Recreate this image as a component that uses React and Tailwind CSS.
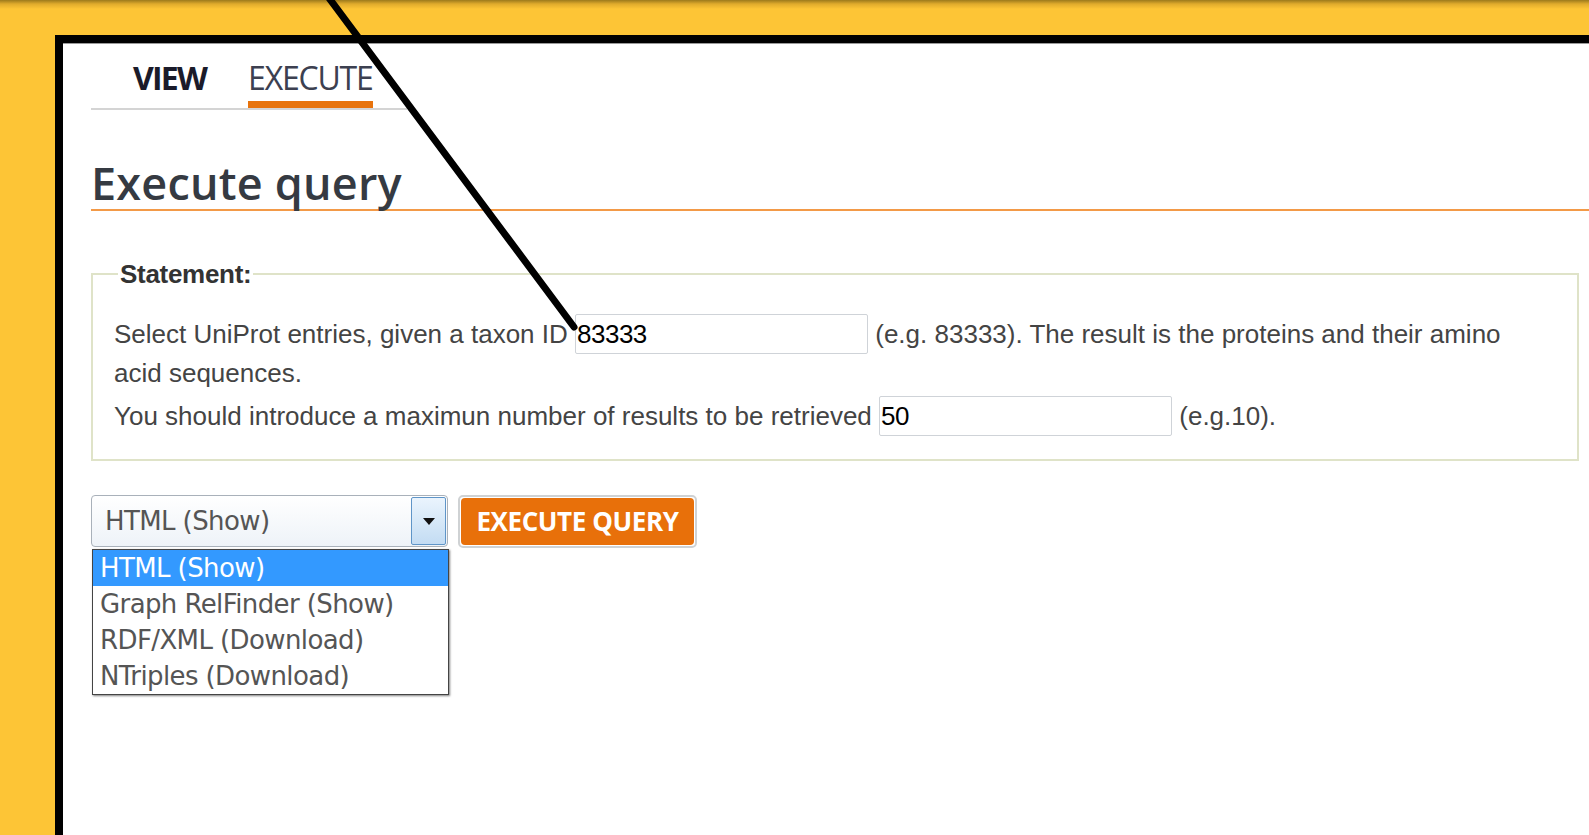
import { useState } from 'react';

const OPTIONS = ['HTML (Show)', 'Graph RelFinder (Show)', 'RDF/XML (Download)', 'NTriples (Download)'];

export default function App() {
  const [format, setFormat] = useState(OPTIONS[0]);
  const [taxon, setTaxon] = useState('83333');
  const [limit, setLimit] = useState('50');

  return (
    <div className="relative w-[1589px] h-[835px] overflow-hidden bg-[#fdc536] bg-[linear-gradient(to_bottom,#9c7a1c_0px,#e0ab2c_4px,#fdc536_9px,#fdc536_100%)]">
      <div className="h-full pt-[35px] pl-[55px]">
        {/* Page frame */}
        <div className="h-full border-l-8 border-t-8 border-black bg-white shadow-[inset_0_1px_0_#9a9a9a] pl-[28px] font-['Open_Sans',sans-serif]">
          {/* Tabs */}
          <div className="flex w-[316px] gap-[42px] pl-[42px] pt-[17px] border-b-2 border-[#d4d4d4]">
            <div className="text-[32px] leading-[36px] font-bold tracking-[-1.8px] text-[#1b1b2a]">VIEW</div>
            <div className="text-[32px] leading-[36px] tracking-[-1.2px] text-[#3c4050]">
              EXECUTE
              <div className="mt-[5px] h-[7px] bg-[#e8730c]" />
            </div>
          </div>

          <h1 className="mt-[47px] border-b-2 border-[#f39a47] text-[45px] leading-[52px] font-semibold tracking-[0.2px] text-[#353a42]">
            Execute query
          </h1>

          {/* Statement */}
          <fieldset className="mt-[48px] mr-[10px] border-2 border-[#dfe3c8] pl-[21px] pr-[45px] pb-[23px] font-['Liberation_Sans',Arial,sans-serif] text-[26px] text-[#444]">
            <legend className="ml-[4px] px-[2px] text-[26px] leading-[30px] font-bold tracking-[-0.3px] text-[#333]">Statement:</legend>
            <p className="mt-[25px] leading-[38px]">
              Select UniProt entries, given a taxon ID{' '}
              <input
                value={taxon}
                onChange={(e) => setTaxon(e.target.value)}
                className="h-[40px] w-[293px] border border-[#cfd3d8] rounded-[2px] px-[1px] text-[26px] tracking-[-0.5px] text-black outline-none"
              />{' '}
              (e.g. 83333). The result is the proteins and their amino acid sequences.
            </p>
            <p className="mt-[4px] leading-[38px]">
              You should introduce a maximun number of results to be retrieved{' '}
              <input
                value={limit}
                onChange={(e) => setLimit(e.target.value)}
                className="h-[40px] w-[293px] border border-[#cfd3d8] rounded-[2px] px-[1px] text-[26px] tracking-[-0.5px] text-black outline-none"
              />{' '}
              (e.g.10).
            </p>
          </fieldset>

          {/* Output format + run */}
          <div className="mt-[34px] flex items-start gap-[10px]">
            <div className="relative">
              <div className="flex h-[52px] w-[357px] items-center rounded-[4px] border border-[#a9b1ba] bg-[linear-gradient(to_bottom,#ffffff,#eef3f8)] font-['DejaVu_Sans',Verdana,sans-serif]">
                <span className="flex-1 pl-[13px] text-[26px] tracking-[-0.6px] text-[#555]">{format}</span>
                <div className="mr-[1px] flex h-[48px] w-[35px] items-center justify-center rounded-[2px] border border-[#5f95c8] bg-[linear-gradient(to_bottom,#eaf4fd,#c3dcf3)]">
                  <svg width="12" height="7" viewBox="0 0 12 7">
                    <path d="M0 0h12L6 7z" fill="#111" />
                  </svg>
                </div>
              </div>
              <ul className="absolute left-[1px] top-[54px] w-[357px] border border-[#444] bg-white shadow-[1px_1px_2px_rgba(0,0,0,0.5)] font-['DejaVu_Sans',Verdana,sans-serif] text-[26px] tracking-[-0.6px]">
                {OPTIONS.map((o) => (
                  <li
                    key={o}
                    onClick={() => setFormat(o)}
                    className={`h-[36px] pl-[7px] leading-[36px] ${o === format ? 'bg-[#3399ff] text-white' : 'text-[#555]'}`}
                  >
                    {o}
                  </li>
                ))}
              </ul>
            </div>
            <div className="rounded-[5px] border-2 border-[#cfd2d4] p-[1px]">
              <button className="h-[47px] w-[233px] rounded-[4px] bg-[#e8700a] text-[26px] font-bold tracking-[-0.4px] text-white">
                EXECUTE QUERY
              </button>
            </div>
          </div>
        </div>
      </div>

      {/* Annotation stroke across the page */}
      <svg className="pointer-events-none absolute inset-0" width="1589" height="835">
        <line x1="326" y1="-6" x2="574" y2="327" stroke="#000" strokeWidth="7" strokeLinecap="round" />
      </svg>
    </div>
  );
}
